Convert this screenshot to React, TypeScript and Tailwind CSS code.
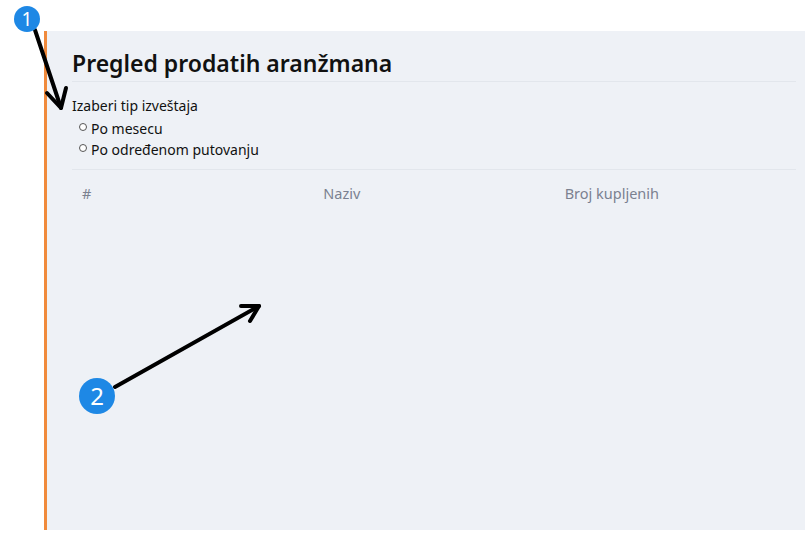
export default function App() {
  return (
    <div className="relative w-[805px] h-[538px] bg-white overflow-hidden" style={{ fontFamily: '"Noto Sans", sans-serif' }}>
      <div className="pt-[31px] pl-[44px] h-[530px]">
        <div className="h-full bg-[#eef1f6] border-l-[3px] border-[#f08a3c] pl-[25px] pr-[9px]">
          {/* heading */}
          <h1 className="pt-[16px] pb-[2px] text-[23px] leading-[32px] font-semibold text-[#111]">
            Pregled prodatih aranžmana
          </h1>
          <div className="h-px bg-[#e2e6ec]"></div>

          {/* report type */}
          <div className="pt-[13px] text-[14px] leading-[21px] text-[#111]">
            <div className="mb-[2px]">Izaberi tip izveštaja</div>
            <label className="flex items-center gap-[4px] pl-[7px]">
              <span className="w-[8px] h-[8px] -mt-[4px] rounded-full border border-[#555] bg-white"></span>
              Po mesecu
            </label>
            <label className="flex items-center gap-[4px] pl-[7px]">
              <span className="w-[8px] h-[8px] -mt-[4px] rounded-full border border-[#555] bg-white"></span>
              Po određenom putovanju
            </label>
          </div>
          <div className="mt-[9px] h-px bg-[#e2e6ec]"></div>

          {/* table header */}
          <div className="grid grid-cols-3 pt-[13px] text-[14.5px] leading-[20px] text-[#7b8190]">
            <div className="px-[10px]">#</div>
            <div className="px-[10px]">Naziv</div>
            <div className="px-[10px]">Broj kupljenih</div>
          </div>
        </div>
      </div>

      {/* annotations */}
      <svg className="absolute left-0 top-0" width="805" height="538">
        <g stroke="#000" strokeWidth="4" strokeLinecap="round" strokeLinejoin="round" fill="none">
          <line x1="35" y1="30" x2="61" y2="108" />
          <polyline points="47,93 61,108 66,88" />
          <line x1="115" y1="387" x2="259" y2="306" />
          <polyline points="241,306 259,306 250,321" />
        </g>
        <circle cx="27" cy="19" r="13" fill="#1e88e5" />
        <text x="27" y="26" textAnchor="middle" fill="#fff" fontSize="19" fontFamily="Noto Sans, sans-serif">1</text>
        <circle cx="97" cy="396" r="18" fill="#1e88e5" />
        <text x="97" y="405" textAnchor="middle" fill="#fff" fontSize="24" fontFamily="Noto Sans, sans-serif">2</text>
      </svg>
    </div>
  );
}
